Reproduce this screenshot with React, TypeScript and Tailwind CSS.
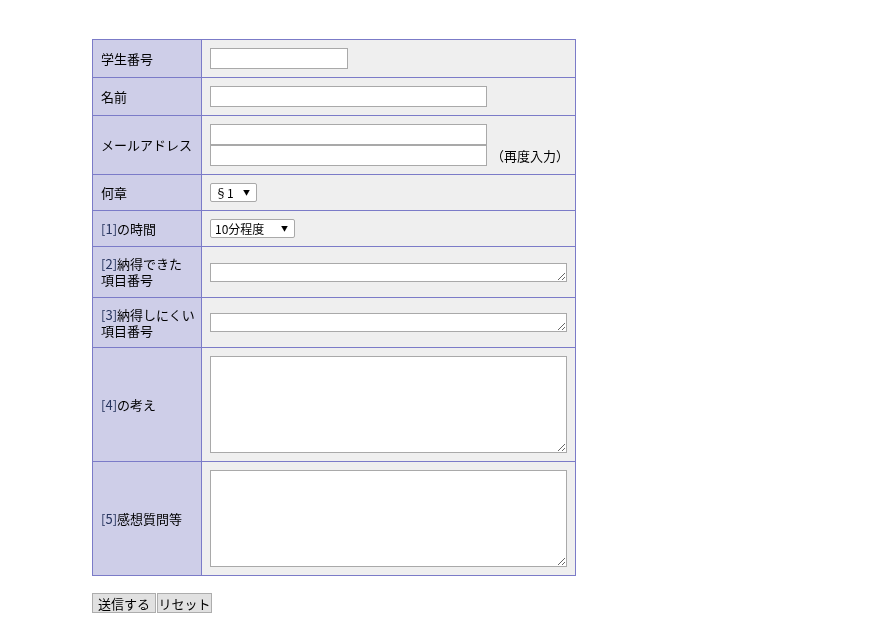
import React from 'react';

const font = { fontFamily: '"Noto Sans CJK JP", "Liberation Sans", sans-serif' };

const labelCls = 'bg-[#cecee8] border border-[#7b7bc8] pl-[8px] pr-[4px] align-middle text-[13px] leading-[16px] text-black';
const valueCls = 'bg-[#efefef] border border-[#7b7bc8] pl-[8px] align-middle';
const inputCls = 'block bg-white border border-[#a9a9a9] h-[21px] outline-none';
const areaCls = 'block bg-white border border-[#a9a9a9] w-[357px] outline-none resize';

const Num: React.FC<{ n: number }> = ({ n }) => <span className="text-[#26345e]">[{n}]</span>;

const Select: React.FC<{ label: string; width: string }> = ({ label, width }) => (
  <div className={`flex items-center justify-between bg-white border border-[#a9a9a9] rounded-[2px] h-[19px] pl-[4px] pr-[6px] text-[12px] text-black ${width}`}>
    <span>{label}</span>
    <span className="text-[7px]">▼</span>
  </div>
);

export default function App() {
  return (
    <div className="min-h-[629px] bg-white pl-[92px] pt-[39px]" style={font}>
      <table className="border-collapse w-[484px]">
        <tbody>
          <tr>
            <td className={`${labelCls} w-[109px] h-[38px]`}>学生番号</td>
            <td className={valueCls}>
              <input className={`${inputCls} w-[138px]`} />
            </td>
          </tr>
          <tr>
            <td className={`${labelCls} h-[38px]`}>名前</td>
            <td className={valueCls}>
              <input className={`${inputCls} w-[277px]`} />
            </td>
          </tr>
          <tr>
            <td className={`${labelCls} h-[59px]`}>メールアドレス</td>
            <td className={valueCls}>
              <input className={`${inputCls} w-[277px]`} />
              <div className="flex items-center gap-[4px]">
                <input className={`${inputCls} w-[277px]`} />
                <span className="text-[13px] leading-[16px] text-black">（再度入力）</span>
              </div>
            </td>
          </tr>
          <tr>
            <td className={`${labelCls} h-[36px]`}>何章</td>
            <td className={valueCls}>
              <Select label="§1" width="w-[47px]" />
            </td>
          </tr>
          <tr>
            <td className={`${labelCls} h-[36px]`}>
              <Num n={1} />の時間
            </td>
            <td className={valueCls}>
              <Select label="10分程度" width="w-[85px]" />
            </td>
          </tr>
          <tr>
            <td className={`${labelCls} h-[51px]`}>
              <Num n={2} />納得できた
              <br />
              項目番号
            </td>
            <td className={valueCls}>
              <textarea className={`${areaCls} h-[19px]`} />
            </td>
          </tr>
          <tr>
            <td className={`${labelCls} h-[50px]`}>
              <Num n={3} />納得しにくい
              <br />
              項目番号
            </td>
            <td className={valueCls}>
              <textarea className={`${areaCls} h-[19px]`} />
            </td>
          </tr>
          <tr>
            <td className={`${labelCls} h-[114px]`}>
              <Num n={4} />の考え
            </td>
            <td className={valueCls}>
              <textarea className={`${areaCls} h-[97px]`} />
            </td>
          </tr>
          <tr>
            <td className={`${labelCls} h-[114px]`}>
              <Num n={5} />感想質問等
            </td>
            <td className={valueCls}>
              <textarea className={`${areaCls} h-[97px]`} />
            </td>
          </tr>
        </tbody>
      </table>
      <div className="flex gap-[1px] mt-[17px]">
        <button className="h-[20px] w-[64px] bg-[#e1e1e1] border border-[#adadad] text-[13px] leading-none text-black">送信する</button>
        <button className="h-[20px] w-[55px] bg-[#e1e1e1] border border-[#adadad] text-[13px] leading-none text-black">リセット</button>
      </div>
    </div>
  );
}
